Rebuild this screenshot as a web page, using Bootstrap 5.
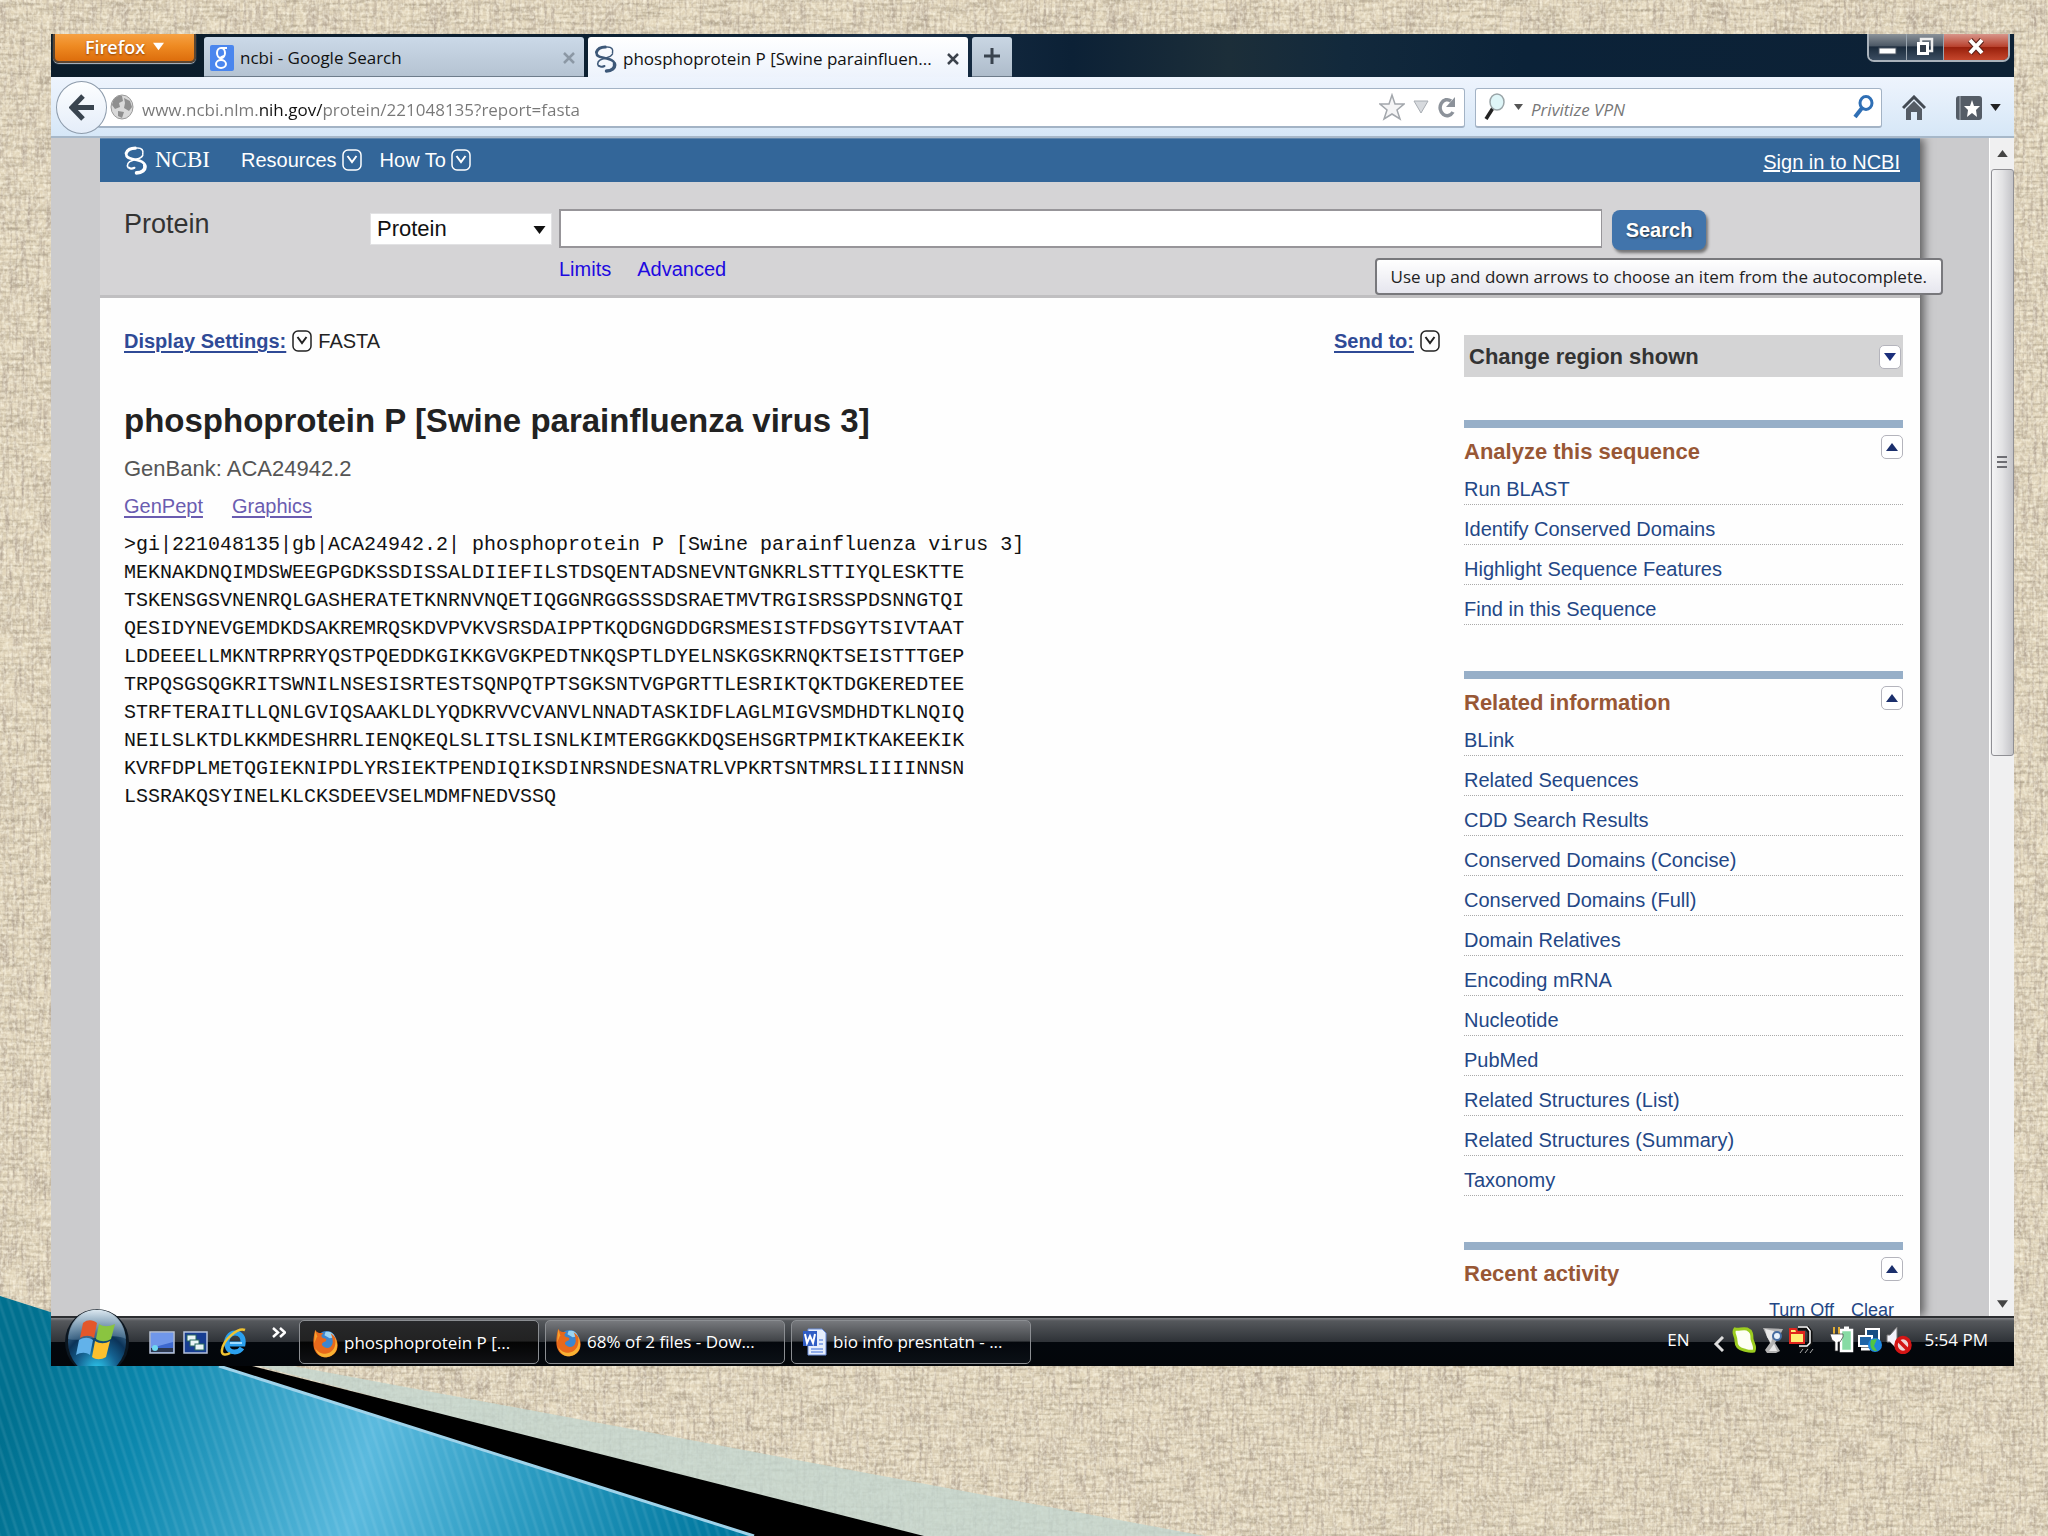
<!DOCTYPE html>
<html lang="en">
<head>
<meta charset="utf-8">
<meta name="viewport" content="width=device-width, initial-scale=1">
<title>phosphoprotein P [Swine parainfluenza virus 3]</title>
<link rel="stylesheet" href="https://cdn.jsdelivr.net/npm/bootstrap@5.3.0/dist/css/bootstrap.min.css">
<script src="https://cdn.jsdelivr.net/npm/bootstrap@5.3.0/dist/js/bootstrap.bundle.min.js"></script>
<style>
:root{--ui:"Open Sans","Noto Sans",sans-serif;--web:"Liberation Sans",Arial,sans-serif}
body{font-family:var(--web);font-size:20px;line-height:28px;background:#ddd0b3;color:#222}
button{font:inherit;color:inherit;background:none;border:0;padding:0}
svg{flex:none;display:block}
.backdrop{position:fixed;inset:0;width:100%;height:100%;z-index:-1}
.desktop{height:100vh;padding:34px 34px 170px 51px}
.ui{font-family:var(--ui);font-size:17px;line-height:24px}
/* title bar */
.titlebar{height:43px;background:linear-gradient(90deg,#0b1c2a,#0d2234 38%,#1a3048 42%,#0c2136 52%,#1c2e39 60%,#12293c 66%,#0b2238 75%,#0d2135)}
.fx-menu{width:143px;height:29px;margin-left:2px;margin-right:8px;color:#fff;font-size:18px;line-height:22px;padding-bottom:2px;background:linear-gradient(#f6a143,#ee8a22 45%,#dd6d0c);border:2px solid #5c4632;border-top:0;border-radius:0 0 6px 6px;text-shadow:0 1px 2px #8a3c00;box-shadow:0 1px 1px #b9c0c8}
.tabs{padding-top:3px;gap:4px}
.tab-item{width:380px;padding:4px 9px 0 6px;gap:6px;color:#111;background:linear-gradient(#cbd9e8,#b5c3d2);border-radius:3px 3px 0 0;border-bottom:1px solid #6d7b8a}
.tab-item.current{background:linear-gradient(#fff,#edf3fc);border-bottom:0}
.tab-add{width:40px;background:linear-gradient(#c9d6e3,#aebccb);border-bottom:1px solid #6d7b8a;border-radius:3px 3px 0 0}
.winctl{height:28px;margin-right:4px;border:2px solid #a9b2bb;border-top:0;border-radius:0 0 7px 7px;overflow:hidden;background:#1a2a3d}
.winctl button{height:26px;border-right:1px solid #9aa5b0;background:linear-gradient(#8b9299,#4d5966 45%,#1b2b3c 50%,#3b4d61)}
.winctl .closer{border:0;background:linear-gradient(#d8958a,#b9432f 48%,#98200c 52%,#c5462c)}
/* navigation bar */
.navrow{height:62px;padding:2px 13px 0 5px;background:linear-gradient(#eef4fd,#d6e7f7);border-bottom:2px solid #a7b8c9}
.back{width:51px;height:53px;border-radius:50%;border:1px solid #8d9bab;background:linear-gradient(#fdfeff,#e4edf9);z-index:1}
.field{height:40px;background:#fff;border:1px solid #a3b3c5;border-bottom-width:2px;border-radius:3px}
.field input{border:0;outline:0;background:none;padding:0;min-width:0;height:32px}
.address{margin-left:-10px;padding:0 7px 0 12px}
.address input{color:transparent;background:linear-gradient(90deg,#777 117px,#111 117px,#111 182px,#777 182px) no-repeat;-webkit-background-clip:text;background-clip:text}
.finder{width:407px;margin-left:10px;padding:0 6px 0 8px}
.finder input::placeholder{color:#777;font-style:italic;opacity:1}
.home-btn{margin:0 30px 0 20px}
/* viewport */
.viewport{background:#cbcbcd;min-height:0}
.sheet{margin:0 94px 0 49px;background:#fefefe;box-shadow:4px 0 9px rgba(0,0,0,.55);clip-path:inset(0 -30px 0 0)}
.ncbi-bar{height:44px;padding:0 20px 0 24px;background:#336699;color:#fff}
.ncbi-bar a,.ncbi-bar button{color:#fff}
.ncbi-bar button{gap:5px;margin-right:18px}
.ncbi-word{font-family:"Liberation Serif",serif;font-size:23px;margin-right:31px}
.query{height:116px;padding:0 24px;background:#d5d4d6;border-bottom:3px solid #c0bfc1;position:relative}
.query-name{width:246px;padding-top:26px;font-size:27px;line-height:32px;color:#333}
.pick{width:182px;margin:31px 7px 0 0}
.pick select{width:100%;height:32px;border:1px solid #e2e2e4;background:#fff;border-radius:0;appearance:none;padding:0 6px;font-size:22px;line-height:28px;color:#111}
.pick svg{position:absolute;right:6px;top:13px;pointer-events:none}
.term{width:1043px;margin-top:27px}
.term input{width:100%;height:39px;border:2px solid #979599;border-right-width:1px;border-radius:0;background:#fff}
.term a{color:#2009e0;text-decoration:none}
.term-links{gap:26px;margin-top:7px}
.go{width:94px;height:40px;margin:28px 0 0 10px;color:#fff;font-weight:700;background:#4174ab;border-radius:8px;box-shadow:2px 3px 3px rgba(0,0,0,.45);text-shadow:1px 1px 2px #234}
.hint{position:absolute;right:-23px;top:76px;height:37px;padding:5px 14px;color:#222;white-space:nowrap;background:linear-gradient(#fff,#e6e6ee);border:2px solid #78787c;border-radius:4px;z-index:3}
.report{padding:29px 0 0 24px}
.strong-link{color:#2f4a96;font-weight:700;text-decoration:underline;text-underline-offset:3px}
.report h1{font-size:33px;line-height:40px;font-weight:700;margin:46px 0 14px;color:#222}
.gb{font-size:22px;color:#555}
.drop-gap{margin:0 6px}
.formats{gap:29px;margin:9px 0 11px}
.formats a{color:#6a5cb0;text-underline-offset:3px}
.fasta{font-family:"Liberation Mono",monospace;font-size:20px;line-height:28px;color:#111;margin:0;overflow:visible}
.rail{width:439px;margin:37px 17px 0 24px}
.region{height:42px;padding:2px 2px 0 5px;background:#d4d4d5;font-size:22px;font-weight:700;color:#333;margin-bottom:43px}
.toggler{width:22px;height:24px;background:#fff;border:1px solid #b4b4bc;border-radius:5px}
.panel{border-top:8px solid #97afc8;margin-bottom:46px}
.panel h2{font-size:22px;line-height:30px;font-weight:700;color:#985735;margin:0;padding-top:2px}
.panel-head{height:37px;padding-top:7px}
.panel li{height:40px;padding-top:10px;border-bottom:1px dotted #aaa}
.panel a{color:#234786;text-decoration:none}
.recent{gap:17px;padding:9px 9px 0 0;font-size:18px}
.scroller{width:25px;background:#f0f0f1;margin-left:-25px;z-index:1;border-left:1px solid #fff}
.thumb{width:23px;flex:0 1 587px;background:linear-gradient(90deg,#f4f4f5,#e2e2e4 50%,#c3c3c7);border:1px solid #8f8f94;border-radius:3px}
/* task bar */
.taskbar{height:50px;background:linear-gradient(#85868a,#55585c 6%,#2f3338 49%,#03070c 51%,#03060a);border-top:2px solid #2c2e31;color:#fff;padding-left:12px}
.task{width:240px;height:44px;margin-right:6px;padding:0 12px 0 10px;gap:6px;border:1px solid #8b8e92;border-radius:5px;background:linear-gradient(#77797d,#404347 48%,#04070c 50%,#0b1016)}
.task.pressed{background:linear-gradient(#28292b,#222 48%,#040404 50%,#101114);padding:2px 12px 0 13px}
.orb{margin-top:-9px;width:70px;height:57px}
.more{margin:0 13px 20px 25px}
.tray{padding:0 26px 4px 0}
</style>
</head>
<body>
<svg class="backdrop" viewBox="0 0 2048 1536" preserveAspectRatio="none" aria-hidden="true">
  <defs>
    <filter id="weft" x="0" y="0" width="100%" height="100%"><feTurbulence type="fractalNoise" baseFrequency=".03 .32" numOctaves="2" seed="3"/><feColorMatrix values="0 0 0 0 .4  0 0 0 0 .34  0 0 0 0 .24  1.7 0 0 0 -.7"/></filter>
    <filter id="warp" x="0" y="0" width="100%" height="100%"><feTurbulence type="fractalNoise" baseFrequency=".32 .03" numOctaves="2" seed="8"/><feColorMatrix values="0 0 0 0 .4  0 0 0 0 .33  0 0 0 0 .27  1.7 0 0 0 -.7"/></filter>
    <filter id="lite" x="0" y="0" width="100%" height="100%"><feTurbulence type="fractalNoise" baseFrequency=".3 .26" numOctaves="2" seed="5"/><feColorMatrix values="0 0 0 0 .98  0 0 0 0 .93  0 0 0 0 .79  1.6 0 0 0 -.6"/></filter>
    <linearGradient id="sea" gradientUnits="userSpaceOnUse" x1="0" y1="1440" x2="700" y2="1610"><stop offset="0" stop-color="#00708f"/><stop offset=".18" stop-color="#0b87ad"/><stop offset=".5" stop-color="#5bbade"/><stop offset=".72" stop-color="#2c9cc2"/><stop offset="1" stop-color="#00789f"/></linearGradient>
    <pattern id="pin" width="9" height="40" patternUnits="userSpaceOnUse" patternTransform="rotate(-18)"><path d="M2 0V40" stroke="#fff" stroke-opacity=".08" stroke-width="3"/></pattern>
  </defs>
  <rect width="2048" height="1536" fill="#e3d7bd"/>
  <rect width="2048" height="1536" filter="url(#weft)"/>
  <rect width="2048" height="1536" filter="url(#warp)"/>
  <rect width="2048" height="1536" filter="url(#lite)"/>
  <path d="M180 1345 1205 1536H900Z" fill="#c3d6d0" fill-opacity=".78"/>
  <path d="M90 1325 924 1536H740Z" fill="#000"/>
  <path d="M0 1296 754 1536H0Z" fill="url(#sea)"/><path d="M0 1296 754 1536H0Z" fill="url(#pin)"/>
  <path d="M219 1366 754 1536" stroke="#9fd3ea" stroke-width="3"/>
</svg>
<svg width="0" height="0" class="position-absolute" aria-hidden="true">
  <symbol id="drop" viewBox="0 0 20 22"><rect x="1" y="1" width="18" height="20" rx="5" fill="none" stroke="currentColor" stroke-width="1.5"/><path d="m5.500 7 4.500 6 4.500-6" fill="none" stroke="currentColor" stroke-width="2"/></symbol>
  <symbol id="tri-down" viewBox="0 0 12 8"><path d="M0 0H12L6 8Z" fill="currentColor"/></symbol>
  <symbol id="tri-up" viewBox="0 0 12 8"><path d="M0 8H12L6 0Z" fill="currentColor"/></symbol>
  <symbol id="helix" viewBox="0 0 22 28"><g fill="none" stroke="currentColor" stroke-linecap="round"><path d="M2 7C3 4 6 2 11 2" stroke-width="3"/><path d="M13 2c4 0 6 2 5 6" stroke-width="1.500"/><path d="M2 8c0 4 4 4 8 5s8 1 10 5" stroke-width="2.500"/><path d="M18 9c-2 4-6 3-10 5-4 1-6 4-4 7" stroke-width="1.500"/><path d="M20 19c1 4-3 7-8 7" stroke-width="3.500"/><path d="M5 21c1 1 3 1 5 0" stroke-width="2"/></g></symbol>
  <symbol id="fox" viewBox="0 0 24 28"><ellipse cx="13" cy="13" rx="10" ry="11" fill="#3c86cf"/><path d="M12 3c4-1 8 1 9 5l-5 1-5-3Z" fill="#9bd4f2"/><path d="M2 1c2 3 4 3 8 3-3 2-2 4 0 5 2 0 4 1 2 3-3 1-4 2-3 4 3 4 9 3 10-3 0-4-1-7-2-9 6 4 8 10 6 16-3 8-15 10-20 3C-1 18 0 9 2 1Z" fill="#e8691b"/><path d="M21 8c2 8-1 15-9 16-4 0-8-2-10-6 2 8 8 10 12 9 8-1 12-10 7-19Z" fill="#f9b233"/><path d="m2 1 2 6-3 7Z" fill="#f6a02d"/></symbol>
</svg>

<main class="desktop">
<div class="d-flex flex-column h-100">
  <header class="titlebar ui d-flex">
    <button class="fx-menu d-flex align-items-center justify-content-center gap-2 fw-semibold">Firefox <svg width="11" height="9"><use href="#tri-down"/></svg></button>
    <nav class="tabs d-flex" aria-label="Tabs">
      <div class="tab-item d-flex align-items-center">
        <svg width="24" height="26" viewBox="0 0 24 26"><rect width="24" height="26" rx="2" fill="#4a86ee"/><g fill="none" stroke="#fff" stroke-width="2"><ellipse cx="11" cy="8" rx="4" ry="5"/><ellipse cx="11" cy="19" rx="5" ry="4"/><path d="M11 3h6M14 11c-3 1-5 2-2 4"/></g></svg>
        <span class="flex-grow-1">ncbi - Google Search</span>
        <button aria-label="Close tab"><svg width="12" height="12" viewBox="0 0 12 12"><path d="m1 1 10 10M11 1 1 11" stroke="#8c98a5" stroke-width="2.500"/></svg></button>
      </div>
      <div class="tab-item current d-flex align-items-center">
        <svg width="23" height="28" color="#3d5878"><use href="#helix"/></svg>
        <span class="flex-grow-1 text-nowrap">phosphoprotein P [Swine parainfluen...</span>
        <button aria-label="Close tab"><svg width="12" height="12" viewBox="0 0 12 12"><path d="m1 1 10 10M11 1 1 11" stroke="#3c434c" stroke-width="2.500"/></svg></button>
      </div>
      <button class="tab-add d-flex align-items-center justify-content-center" aria-label="New tab"><svg width="16" height="16" viewBox="0 0 16 16"><path d="M8 0v16M0 8h16" stroke="#39434e" stroke-width="3"/></svg></button>
    </nav>
    <div class="winctl d-flex ms-auto">
      <button aria-label="Minimize" class="px-2"><svg width="21" height="24" viewBox="0 0 21 24"><rect x="2" y="13" width="17" height="6" fill="#fff" stroke="#4b5562"/></svg></button>
      <button aria-label="Restore" class="px-2"><svg width="20" height="24" viewBox="0 0 20 24"><path d="M6 8V4H17V16H13" fill="none" stroke="#eee" stroke-width="2.500"/><rect x="3.500" y="8.500" width="9" height="10" fill="#333e4b" stroke="#fff" stroke-width="3"/></svg></button>
      <button aria-label="Close" class="closer px-4"><svg width="16" height="24" viewBox="0 0 16 24"><path d="m2 5 12 13M14 5 2 18" stroke="#5a2018" stroke-width="6"/><path d="m2 5 12 13M14 5 2 18" stroke="#fff" stroke-width="4"/></svg></button>
    </div>
  </header>

  <div class="navrow ui d-flex align-items-center">
    <button class="back d-flex align-items-center justify-content-center position-relative" aria-label="Back"><svg width="26" height="27" viewBox="0 0 26 27"><path d="M25 13.500H4M14 2 3 13.500 14 25" fill="none" stroke="#39444f" stroke-width="5"/></svg></button>
    <div class="field address flex-grow-1 d-flex align-items-center">
      <svg width="24" height="26" viewBox="0 0 24 26"><ellipse cx="12" cy="13" rx="11" ry="12" fill="#d9d9d9" stroke="#9a9a9a"/><path d="M3 7c2-4 6-6 9-5l1 5-4 2 1 4-5 2-3-4ZM14 4l6 3 2 6-3 4-5-3 1-5ZM8 17l6 1-2 6-4-2Z" fill="#8f8f8f"/></svg>
      <input class="flex-grow-1 ms-2 pt-1" type="text" aria-label="Address" value="www.ncbi.nlm.nih.gov/protein/221048135?report=fasta">
      <div class="d-flex align-items-center gap-2">
        <svg width="26" height="28" viewBox="0 0 26 28"><path d="m13 2 3 9h9l-7 6 3 9-8-5-8 5 3-9-7-6h9Z" fill="#f5f5f6" stroke="#a3a7ac" stroke-width="1.500"/></svg>
        <svg width="16" height="14" viewBox="0 0 16 14"><path d="M1 1H15L8 13Z" fill="#d7dade" stroke="#a8adb3"/></svg>
        <button aria-label="Reload"><svg width="20" height="22" viewBox="0 0 20 22"><path d="M16 16A7 8 0 1 1 14 5" fill="none" stroke="#8c929a" stroke-width="3.500"/><path d="M18 1v10H9Z" fill="#8c929a"/></svg></button>
      </div>
    </div>
    <div class="field finder d-flex align-items-center">
      <svg width="22" height="28" viewBox="0 0 22 28"><path d="m9 15-7 11" stroke="#222" stroke-width="3.500"/><ellipse cx="13" cy="9" rx="7" ry="8" fill="#dff6f8" stroke="#9aa5a8" stroke-width="1.500"/></svg>
      <svg class="ms-2" width="9" height="6" color="#555"><use href="#tri-down"/></svg>
      <input class="flex-grow-1 ms-2 pt-1" type="search" aria-label="Web search" placeholder="Privitize VPN">
      <button aria-label="Search the web"><svg width="22" height="24" viewBox="0 0 22 24"><path d="m9 13-7 9" stroke="#2f6fb5" stroke-width="4"/><ellipse cx="13" cy="8" rx="6" ry="6.500" fill="#fff" stroke="#2f6fb5" stroke-width="3"/></svg></button>
    </div>
    <button class="home-btn" aria-label="Home"><svg width="24" height="25" viewBox="0 0 24 25"><path d="M1 13 12 2l11 11" fill="none" stroke="#434a53" stroke-width="3"/><path d="M4 14 12 6l8 8v11h-5v-8H9v8H4Z" fill="#555c65"/></svg></button>
    <button class="d-flex align-items-center gap-2" aria-label="Bookmarks"><svg width="26" height="24" viewBox="0 0 26 24"><rect width="26" height="24" rx="3" fill="#545c66"/><path d="M4 0v24" stroke="#7e868f" stroke-width="2"/><path d="m16 4 2 6h6l-4 4 1 7-5-4-5 4 1-7-4-4h6Z" fill="#fff"/></svg><svg width="11" height="7" color="#222"><use href="#tri-down"/></svg></button>
  </div>

  <div class="viewport flex-grow-1 d-flex overflow-hidden">
    <div class="sheet flex-grow-1">
      <div class="ncbi-bar d-flex align-items-center">
        <svg width="23" height="29"><use href="#helix"/></svg>
        <span class="ncbi-word ms-2">NCBI</span>
        <button class="d-flex align-items-center">Resources <svg width="20" height="22"><use href="#drop"/></svg></button>
        <button class="d-flex align-items-center">How To <svg width="20" height="22"><use href="#drop"/></svg></button>
        <a class="ms-auto pt-1" href="#">Sign in to NCBI</a>
      </div>
      <form class="query d-flex" onsubmit="return false">
        <div class="query-name">Protein</div>
        <div class="pick position-relative"><select aria-label="Database"><option>Protein</option></select><svg width="13" height="8" color="#111"><use href="#tri-down"/></svg></div>
        <div class="term"><input type="text" aria-label="Search term"><div class="term-links d-flex"><a href="#">Limits</a><a href="#">Advanced</a></div></div>
        <button class="go">Search</button>
        <div class="hint ui" role="tooltip">Use up and down arrows to choose an item from the autocomplete.</div>
      </form>
      <div class="d-flex">
        <article class="report flex-grow-1">
          <div class="d-flex align-items-center">
            <a class="strong-link" href="#">Display Settings:</a>
            <svg class="drop-gap" width="20" height="22"><use href="#drop"/></svg><span>FASTA</span>
            <a class="strong-link ms-auto" href="#">Send to:</a><svg class="drop-gap me-0" width="20" height="22"><use href="#drop"/></svg>
          </div>
          <h1>phosphoprotein P [Swine parainfluenza virus 3]</h1>
          <div class="gb">GenBank: ACA24942.2</div>
          <div class="formats d-flex"><a href="#">GenPept</a><a href="#">Graphics</a></div>
<pre class="fasta">&gt;gi|221048135|gb|ACA24942.2| phosphoprotein P [Swine parainfluenza virus 3]
MEKNAKDNQIMDSWEEGPGDKSSDISSALDIIEFILSTDSQENTADSNEVNTGNKRLSTTIYQLESKTTE
TSKENSGSVNENRQLGASHERATETKNRNVNQETIQGGNRGGSSSDSRAETMVTRGISRSSPDSNNGTQI
QESIDYNEVGEMDKDSAKREMRQSKDVPVKVSRSDAIPPTKQDGNGDDGRSMESISTFDSGYTSIVTAAT
LDDEEELLMKNTRPRRYQSTPQEDDKGIKKGVGKPEDTNKQSPTLDYELNSKGSKRNQKTSEISTTTGEP
TRPQSGSQGKRITSWNILNSESISRTESTSQNPQTPTSGKSNTVGPGRTTLESRIKTQKTDGKEREDTEE
STRFTERAITLLQNLGVIQSAAKLDLYQDKRVVCVANVLNNADTASKIDFLAGLMIGVSMDHDTKLNQIQ
NEILSLKTDLKKMDESHRRLIENQKEQLSLITSLISNLKIMTERGGKKDQSEHSGRTPMIKTKAKEEKIK
KVRFDPLMETQGIEKNIPDLYRSIEKTPENDIQIKSDINRSNDESNATRLVPKRTSNTMRSLIIIINNSN
LSSRAKQSYINELKLCKSDEEVSELMDMFNEDVSSQ</pre>
        </article>
        <aside class="rail flex-shrink-0">
          <div class="region d-flex align-items-center justify-content-between">Change region shown <button class="toggler d-flex align-items-center justify-content-center" aria-label="Expand"><svg width="12" height="8" color="#1b2f7c"><use href="#tri-down"/></svg></button></div>
          <section class="panel"><div class="panel-head d-flex justify-content-between"><h2>Analyze this sequence</h2><button class="toggler d-flex align-items-center justify-content-center" aria-label="Collapse"><svg width="12" height="8" color="#1b2f6c"><use href="#tri-up"/></svg></button></div>
            <ul class="list-unstyled mb-0"><li><a href="#">Run BLAST</a></li><li><a href="#">Identify Conserved Domains</a></li><li><a href="#">Highlight Sequence Features</a></li><li><a href="#">Find in this Sequence</a></li></ul></section>
          <section class="panel"><div class="panel-head d-flex justify-content-between"><h2>Related information</h2><button class="toggler d-flex align-items-center justify-content-center" aria-label="Collapse"><svg width="12" height="8" color="#1b2f6c"><use href="#tri-up"/></svg></button></div>
            <ul class="list-unstyled mb-0"><li><a href="#">BLink</a></li><li><a href="#">Related Sequences</a></li><li><a href="#">CDD Search Results</a></li><li><a href="#">Conserved Domains (Concise)</a></li><li><a href="#">Conserved Domains (Full)</a></li><li><a href="#">Domain Relatives</a></li><li><a href="#">Encoding mRNA</a></li><li><a href="#">Nucleotide</a></li><li><a href="#">PubMed</a></li><li><a href="#">Related Structures (List)</a></li><li><a href="#">Related Structures (Summary)</a></li><li><a href="#">Taxonomy</a></li></ul></section>
          <section class="panel mb-0"><div class="panel-head d-flex justify-content-between"><h2>Recent activity</h2><button class="toggler d-flex align-items-center justify-content-center" aria-label="Collapse"><svg width="12" height="8" color="#1b2f6c"><use href="#tri-up"/></svg></button></div>
            <div class="recent d-flex justify-content-end"><a href="#">Turn Off</a><a href="#">Clear</a></div></section>
        </aside>
      </div>
    </div>
    <div class="scroller flex-shrink-0 d-flex flex-column align-items-center" aria-hidden="true">
      <svg class="my-2 py-1" width="11" height="15" color="#444"><use href="#tri-up"/></svg>
      <div class="thumb d-flex align-items-center justify-content-center"><svg width="10" height="15" viewBox="0 0 10 15"><path d="M0 2h10M0 7h10M0 12h10" stroke="#6e6e73" stroke-width="2"/></svg></div>
      <svg class="mt-auto mb-2" width="11" height="8" color="#444"><use href="#tri-down"/></svg>
    </div>
  </div>

  <footer class="taskbar ui d-flex align-items-center flex-shrink-0 position-relative">
    <button class="orb" aria-label="Start"><svg width="70" height="57" viewBox="0 0 70 57">
      <defs><radialGradient id="orbg" cx=".5" cy=".95" r=".9"><stop offset="0" stop-color="#2fd0f5"/><stop offset=".4" stop-color="#14608f"/><stop offset=".65" stop-color="#0b3358"/><stop offset="1" stop-color="#5f8aa8"/></radialGradient><linearGradient id="orbs" x2="0" y2="1"><stop offset="0" stop-color="#dce8f0"/><stop offset="1" stop-color="#5c82a0" stop-opacity=".5"/></linearGradient></defs>
      <ellipse cx="34" cy="33" rx="32" ry="33" fill="#0b1620"/><ellipse cx="34" cy="33" rx="29" ry="32" fill="url(#orbg)"/><path d="M5 30C7-9 61-9 63 30 50 22 22 34 5 30Z" fill="url(#orbs)"/>
      <path d="M20 14c5-4 10-3 14 0l-3 15c-4-3-9-3-14 0Z" fill="#e4572a"/><path d="M36 15c5 3 9 3 16 0l-4 15c-5 3-10 3-15 0Z" fill="#8ac440"/><path d="M16 31c5-3 10-3 14 0l-3 15c-4-3-9-3-14 0Z" fill="#62b2ea"/><path d="M32 32c5 3 10 3 15 0l-4 16c-5 3-10 3-14 0Z" fill="#fcc02e"/></svg></button>
    <button class="ms-3" aria-label="Show desktop"><svg width="26" height="23" viewBox="0 0 26 23"><rect x="1" y="1" width="24" height="21" fill="#3d69d0" stroke="#b9c4d6" stroke-width="1.500"/><path d="M2 2h22v9L2 17Z" fill="#7097ea"/><path d="M2 17h22v4H2Z" fill="#2c3850"/><circle cx="6" cy="17" r="3" fill="#6fd8f2"/></svg></button>
    <button class="mx-2" aria-label="Switch windows"><svg width="25" height="23" viewBox="0 0 25 23"><rect x="1" y="1" width="23" height="21" fill="#173d92" stroke="#b6c2dc" stroke-width="1.500"/><g fill="#e9f5f6" stroke="#28695f"><rect x="4" y="4" width="9" height="6"/><rect x="7" y="9" width="9" height="6"/><rect x="12" y="13" width="9" height="6"/></g></svg></button>
    <button class="ms-1" aria-label="Internet Explorer"><svg width="27" height="28" viewBox="0 0 27 28"><path d="M22 20c-3 5-13 6-15-2-2-7 3-13 8-13 6 0 9 5 8 11H9" fill="none" stroke="#2ba0ee" stroke-width="5"/><path d="M10 15h12" stroke="#9fdcff" stroke-width="2"/><path d="M25 2C18-1 3 12 2 22c-1 6 5 5 8 3" fill="none" stroke="#f0c332" stroke-width="2.500"/></svg></button>
    <svg class="more" width="14" height="11" viewBox="0 0 14 11"><path d="m1 1 5 4.500L1 10M8 1l5 4.500L8 10" fill="none" stroke="#fff" stroke-width="2.500"/></svg>
    <button class="task pressed d-flex align-items-center"><svg width="25" height="29"><use href="#fox"/></svg><span>phosphoprotein P [...</span></button>
    <button class="task d-flex align-items-center"><svg width="25" height="29"><use href="#fox"/></svg><span>68% of 2 files - Dow...</span></button>
    <button class="task d-flex align-items-center"><svg width="25" height="28" viewBox="0 0 25 28"><path d="M6 1h14l4 4v22H6Z" fill="#e6eefc" stroke="#6d8fdc"/><rect x="1" y="3" width="14" height="15" fill="#2f5cc4"/><path d="m3 6 2 9 3-7 3 7 2-9" fill="none" stroke="#fff" stroke-width="2"/><path d="M9 21h12M9 24h12M17 12h4M17 16h4" stroke="#7397e4" stroke-width="1.500"/></svg><span>bio info presntatn - ...</span></button>
    <div class="tray d-flex align-items-center ms-auto">
      <span class="me-4">EN</span>
      <svg width="11" height="16" viewBox="0 0 11 16" class="mt-2"><path d="M10 1 3 8l7 7" fill="none" stroke="#ddd" stroke-width="3"/></svg>
      <svg class="ms-2 me-1" width="26" height="26" viewBox="0 0 26 26"><path d="M3 2c4 1 7-1 12 0 5 2 5 6 5 10 1 5 4 7 2 12-5 1-6 0-10-1-5-1-8-4-8-9C4 8 0 6 3 2Z" fill="#fdfff4" stroke="#9bcc1f" stroke-width="3"/></svg>
      <svg width="22" height="28" viewBox="0 0 22 28"><path d="m1 2 20 1-5 10-3 4 5 8-4 2H5l-2-3 5-7Z" fill="#b2b2b2"/><path d="m3 3 9 2-3 12-4-6ZM12 18l3 7H7Z" fill="#e9e9e9"/><circle cx="15" cy="10" r="4" fill="#e9f2fb" stroke="#456ca0" stroke-width="2"/></svg>
      <svg class="ms-1" width="26" height="28" viewBox="0 0 26 28"><path d="M10 2h9l3 4v11l-3 4h-8" fill="none" stroke="#111" stroke-width="5"/><path d="M10 1h9l3 4v12l-3 3h-8" fill="none" stroke="#fff" stroke-width="1.500"/><path d="M2 3h6l1 3h7v11H2Z" fill="#ffef75" stroke="#e1261d" stroke-width="2"/><path d="M3 7h13" stroke="#e1261d" stroke-width="2"/><path d="m12 27 3-4M17 27l3-4M22 27l3-4" stroke="#aaa"/></svg>
      <svg class="ms-3 me-1" width="24" height="28" viewBox="0 0 24 28"><rect x="11" y="4" width="11" height="21" fill="#87dba4" stroke="#fff" stroke-width="2.500"/><path d="M14 2h5" stroke="#fff" stroke-width="3"/><path d="M4 1v7M9 1v7" stroke="#e2ad35" stroke-width="2"/><path d="M0 8h13v3l-3 5H8v9H5v-9L2 14Z" fill="#fff" stroke="#333" stroke-width=".700"/></svg>
      <svg class="me-1" width="24" height="28" viewBox="0 0 24 28"><rect x="8" y="3" width="13" height="13" fill="#174e85" stroke="#fff" stroke-width="2"/><rect x="1" y="10" width="13" height="10" fill="#1f65a8" stroke="#fff" stroke-width="2"/><path d="M3 23h9" stroke="#fff" stroke-width="3"/><circle cx="17" cy="19" r="7" fill="#1e86e0"/><path d="m13 14 6-1-3 7 3 5c-5 1-8-5-6-11Z" fill="#51c546"/></svg>
      <svg width="26" height="28" viewBox="0 0 26 28"><path d="M1 9h3l7-8v22l-7-7H1Z" fill="#f3f3fb" stroke="#777"/><ellipse cx="17" cy="19" rx="7" ry="7.500" fill="#efd5d5" stroke="#d41515" stroke-width="3.500"/><path d="m12 14 10 10" stroke="#d41515" stroke-width="3.500"/></svg>
      <span class="ms-2 ps-1">5:54 PM</span>
    </div>
  </footer>
</div>
</main>
</body>
</html>
